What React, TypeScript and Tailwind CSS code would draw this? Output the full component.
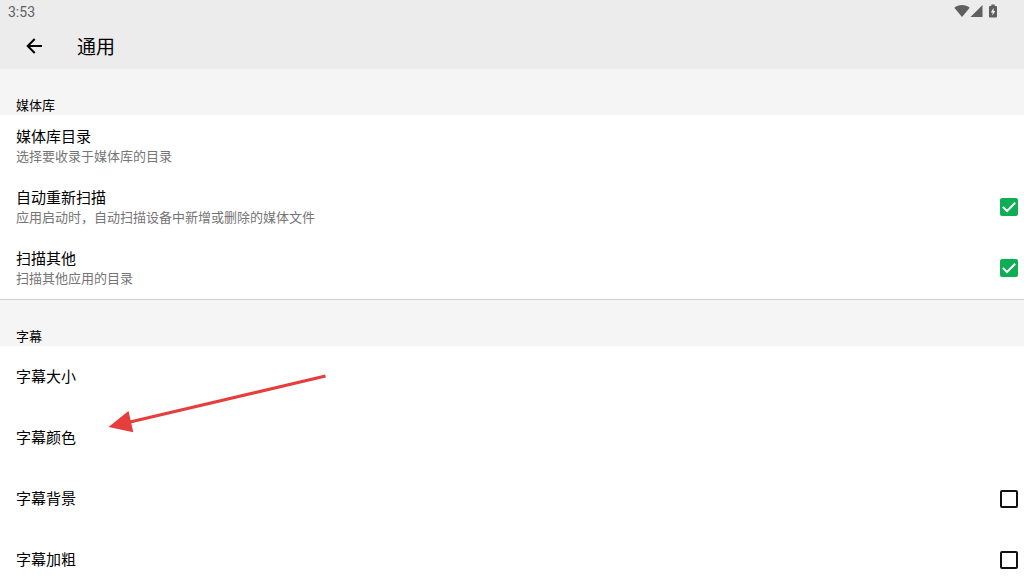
import * as React from 'react'

type Item = {
  id: string
  title: string
  summary?: string
  checked?: boolean
}

const libraryItems: Item[] = [
  { id: 'folders', title: '媒体库目录', summary: '选择要收录于媒体库的目录' },
  { id: 'rescan', title: '自动重新扫描', summary: '应用启动时，自动扫描设备中新增或删除的媒体文件', checked: true },
  { id: 'scan-others', title: '扫描其他', summary: '扫描其他应用的目录', checked: true },
]

const subtitleItems: Item[] = [
  { id: 'size', title: '字幕大小' },
  { id: 'color', title: '字幕颜色' },
  { id: 'background', title: '字幕背景', checked: false },
  { id: 'bold', title: '字幕加粗', checked: false },
]

function StatusBar() {
  return (
    <div className="flex h-6 items-center justify-between pr-6 pl-2 text-[#5f5f5f]">
      <span className="font-['Roboto',sans-serif] text-[14px] leading-6">3:53</span>
      <div className="flex items-center pb-0.5">
        {/* wifi */}
        <svg className="h-3 w-4" viewBox="0 0 16 12" fill="currentColor" aria-hidden="true">
          <path d="M8 12 0.3 2.8C2.4 1 5.1 0 8 0s5.6 1 7.7 2.8z" />
        </svg>
        {/* signal */}
        <svg className="h-3 w-3.5" viewBox="0 0 14 12" fill="currentColor" aria-hidden="true">
          <path d="M0.5 12H12.5V0z" />
        </svg>
        {/* battery */}
        <svg className="ml-1 h-3.5 w-3" viewBox="0 0 12 14" aria-hidden="true">
          <path fill="currentColor" d="M3.3 0.5h3.4V2H8q1 0 1 1v9.5q0 1-1 1H2q-1 0-1-1V3q0-1 1-1h1.3z" />
          <path fill="#ececec" d="M5.6 3.8 2.8 8.4h1.7v3.2l2.7-4.6H5.6z" />
        </svg>
      </div>
    </div>
  )
}

function Checkbox({ defaultChecked }: { defaultChecked: boolean }) {
  return (
    <span className="grid shrink-0 place-items-center">
      <input
        type="checkbox"
        defaultChecked={defaultChecked}
        className="peer col-start-1 row-start-1 size-[18px] appearance-none rounded-xs border-2 border-[#111] checked:border-[#0fae55] checked:bg-[#0fae55]"
      />
      <svg
        className="pointer-events-none col-start-1 row-start-1 hidden size-[18px] peer-checked:block"
        viewBox="0 0 18 18"
        fill="none"
        stroke="#fff"
        strokeWidth="2"
        aria-hidden="true"
      >
        <path d="M2.8 8.9 7 13 15.2 4.8" />
      </svg>
    </span>
  )
}

function Row({ item }: { item: Item }) {
  const text = item.summary ? (
    <span className="flex flex-col pt-px leading-5">
      <span className="text-[15px] text-black">{item.title}</span>
      <span className="text-[13px] text-[#757575]">{item.summary}</span>
    </span>
  ) : (
    <span className="pb-0.5 text-[15px] leading-5 text-black">{item.title}</span>
  )
  const rowClass = 'flex h-[61px] w-full items-center justify-between pr-1.5 pl-4 text-left'

  return (
    <li>
      {item.checked === undefined ? (
        <button type="button" className={rowClass}>{text}</button>
      ) : (
        <label className={rowClass}>
          {text}
          <Checkbox defaultChecked={item.checked} />
        </label>
      )}
    </li>
  )
}

function Section({ title, items }: { title: string; items: Item[] }) {
  return (
    <section className="border-b border-[#d2d2d2]">
      <h2 className="bg-[#f5f5f5] pt-[27px] pb-px pl-4 text-[13px] leading-[18px] text-black">{title}</h2>
      <ul className="pb-px">
        {items.map((item) => <Row key={item.id} item={item} />)}
      </ul>
    </section>
  )
}

export default function App(): React.JSX.Element {
  return (
    <div className="relative h-screen overflow-hidden bg-white font-['Noto_Sans_CJK_SC',sans-serif]">
      <header className="bg-[#ececec]">
        <StatusBar />
        <div className="flex h-[45px] items-center pb-0.5 pl-6">
          <button type="button" aria-label="返回" className="mr-[33px]">
            <svg className="size-5" viewBox="0 0 20 20" fill="none" stroke="#000" strokeWidth="2" aria-hidden="true">
              <path d="M18 10H4M10.7 3 3.7 10l7 7" />
            </svg>
          </button>
          <h1 className="text-[19px] leading-6 text-black">通用</h1>
        </div>
      </header>

      <main>
        <Section title="媒体库" items={libraryItems} />
        <Section title="字幕" items={subtitleItems} />
      </main>

      {/* Pointer to the subtitle color entry */}
      <svg
        className="pointer-events-none absolute top-[370px] left-[105px] h-[70px] w-[225px]"
        viewBox="0 0 225 70"
        aria-hidden="true"
      >
        <path d="M24 52.3 220.5 6" stroke="#e53e3c" strokeWidth="3.2" />
        <path d="M3.5 57 23.5 41 28.3 62.3z" fill="#e53e3c" />
      </svg>
    </div>
  )
}
